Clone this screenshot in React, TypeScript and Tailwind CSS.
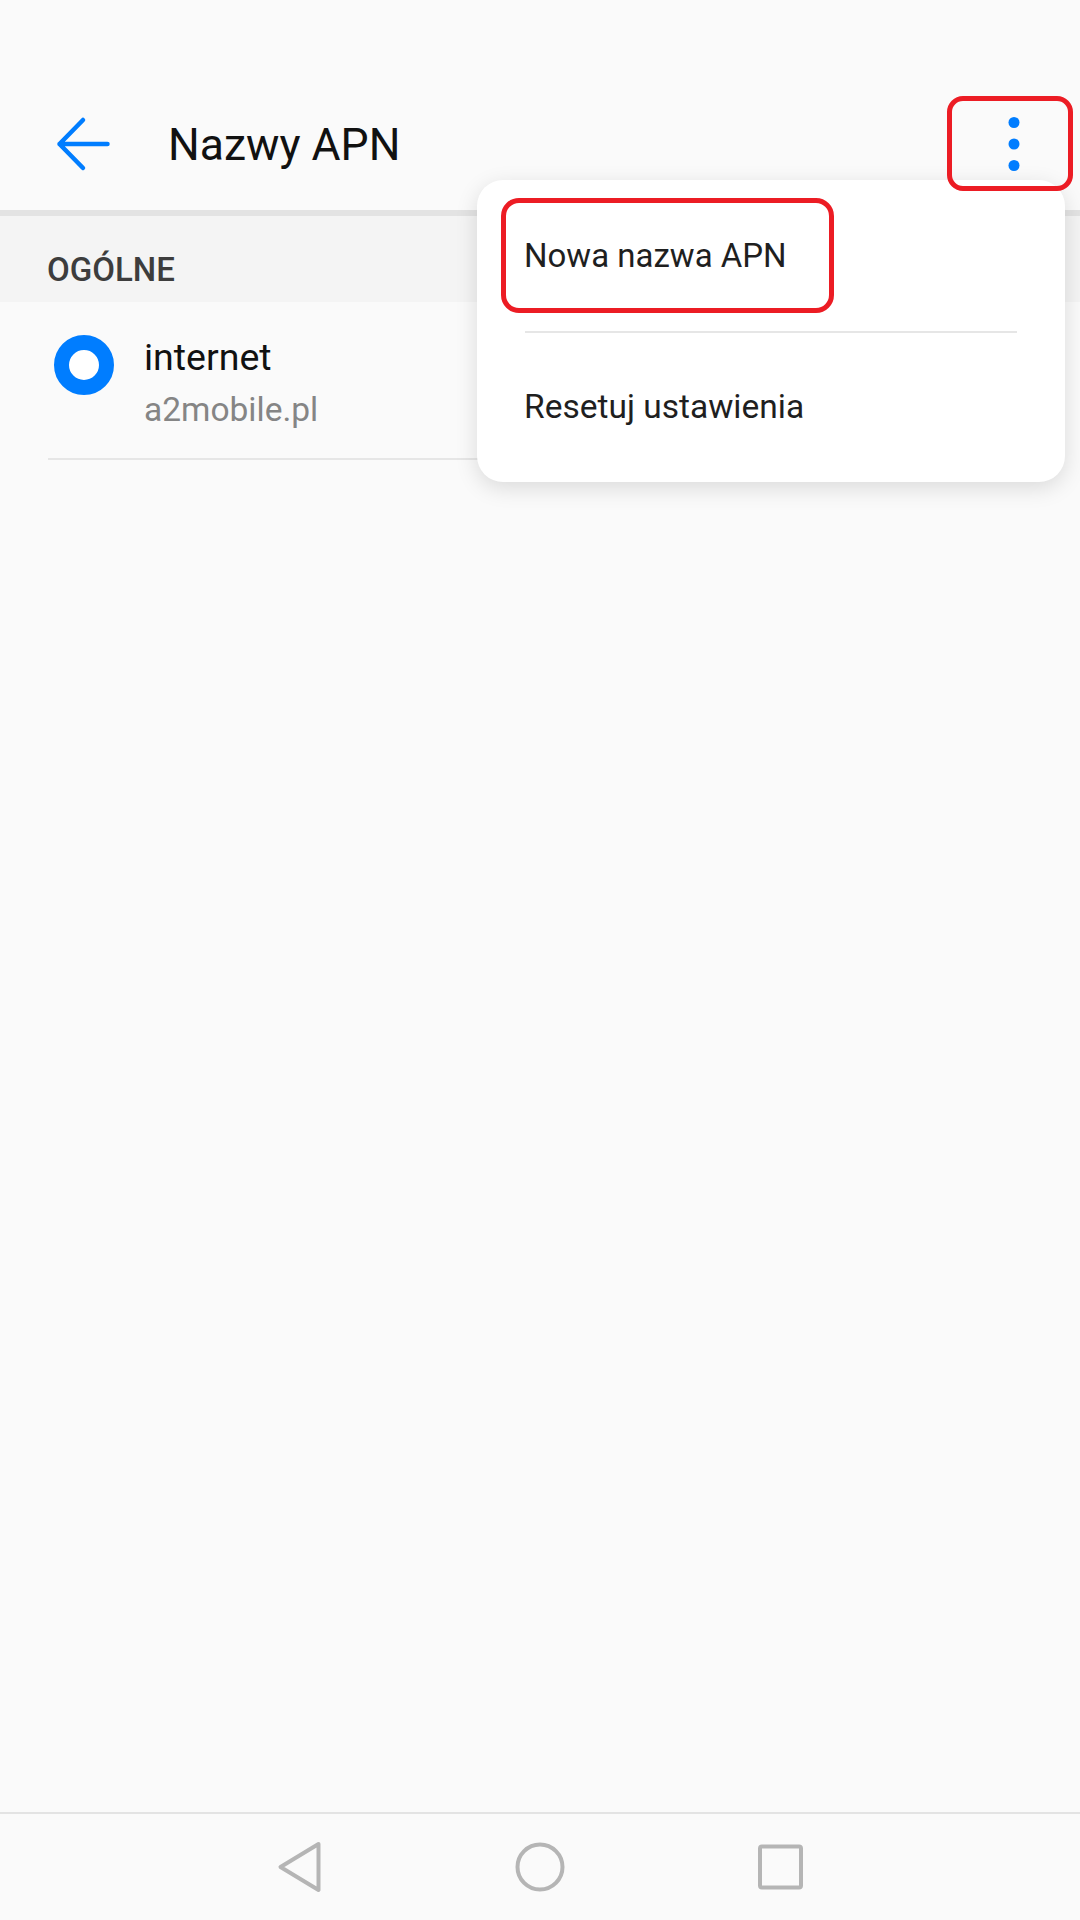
import React from 'react';

const BackArrow = () => (
  <svg width="56" height="56" viewBox="0 0 56 56" fill="none">
    <path d="M4.5 28 L52.5 28 M28 4 L4.5 28 L28 52" stroke="#007dff" strokeWidth="4.5" strokeLinecap="round" strokeLinejoin="round" />
  </svg>
);

const Kebab = () => (
  <svg width="24" height="56" viewBox="0 0 24 56">
    <circle cx="12" cy="6.5" r="5.5" fill="#007dff" />
    <circle cx="12" cy="28" r="5.5" fill="#007dff" />
    <circle cx="12" cy="49.5" r="5.5" fill="#007dff" />
  </svg>
);

const NavBar = () => (
  <div className="h-[106px] flex items-center justify-center gap-[184px]">
    <svg width="56" height="56" viewBox="0 0 56 56" fill="none">
      <path d="M46.5 5 L8.5 28 L46.5 51 Z" stroke="#b5b5b5" strokeWidth="4" strokeLinejoin="round" />
    </svg>
    <svg width="56" height="56" viewBox="0 0 56 56" fill="none">
      <circle cx="28" cy="28" r="22.5" stroke="#b5b5b5" strokeWidth="4" />
    </svg>
    <svg width="56" height="56" viewBox="0 0 56 56" fill="none">
      <rect x="8" y="7.5" width="41" height="41" rx="2" stroke="#b5b5b5" strokeWidth="4" />
    </svg>
  </div>
);

export default function App() {
  return (
    <div className="relative min-h-[1920px] w-[1080px] flex flex-col bg-[#fafafa] font-['Roboto',sans-serif]">
      {/* status bar */}
      <div className="h-[78px]" />

      {/* toolbar */}
      <div className="h-[132px] flex items-center pl-[55px] pr-[54px]">
        <BackArrow />
        <span className="ml-[57px] mt-[2px] text-[44.5px] leading-[56px] text-[#111]">Nazwy APN</span>
        <div className="ml-auto">
          <Kebab />
        </div>
      </div>
      <div className="h-[6px] bg-[#e3e3e3]" />

      {/* section */}
      <div className="h-[86px] bg-[#f4f4f4] pt-[34px] pl-[47px]">
        <div className="text-[33px] leading-[40px] font-medium text-[#3d3d3d]">OGÓLNE</div>
      </div>

      <div className="h-[156px] flex pl-[54px] pt-[33px]">
        <div className="w-[60px] h-[60px] rounded-full border-[15px] border-[#007dff] bg-white" />
        <div className="ml-[30px] flex flex-col">
          <span className="text-[37.5px] leading-[44px] text-[#111]">internet</span>
          <span className="mt-[7px] text-[33.5px] leading-[48px] text-[#858585]">a2mobile.pl</span>
        </div>
      </div>
      <div className="h-[2px] mx-[48px] bg-[#e6e6e6]" />

      <div className="flex-1" />

      <div className="h-[2px] bg-[#e3e3e3]" />
      <NavBar />

      {/* overflow menu */}
      <div className="absolute left-[477px] top-[180px] w-[588px] bg-white rounded-[26px] shadow-[0_6px_22px_rgba(0,0,0,0.13)]">
        <div className="h-[151px] flex items-center pl-[47px] text-[33px] text-[#1f1f1f]">Nowa nazwa APN</div>
        <div className="h-[2px] mx-[48px] bg-[#e6e6e6]" />
        <div className="h-[149px] flex items-center pl-[47px] text-[33.5px] text-[#1f1f1f]">Resetuj ustawienia</div>

        {/* annotation */}
        <div className="absolute left-[24px] top-[18px] w-[333px] h-[115px] rounded-[18px] border-[5px] border-[#ec1c24]" />
      </div>

      {/* annotation round menu button */}
      <div className="absolute left-[947px] top-[96px] w-[126px] h-[95px] rounded-[16px] border-[5px] border-[#ec1c24]" />
    </div>
  );
}
